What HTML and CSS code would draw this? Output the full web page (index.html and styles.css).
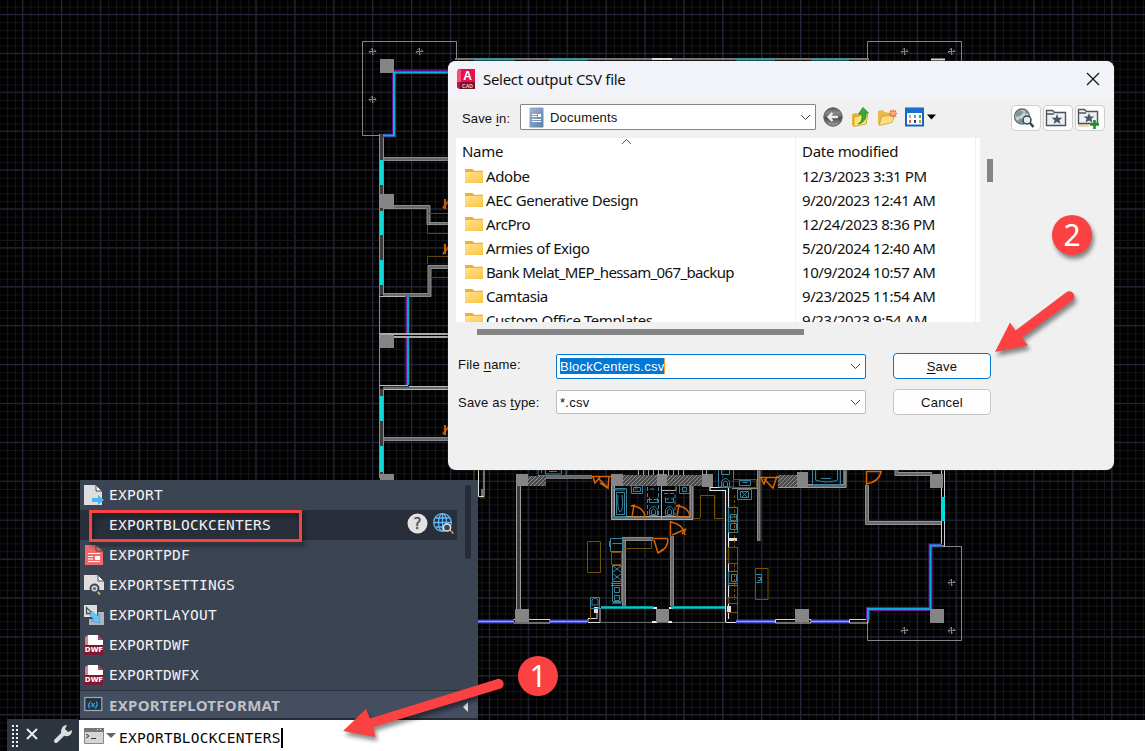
FILE: index.html
```
<!DOCTYPE html>
<html lang="en">
<head>
<meta charset="utf-8">
<title>Export Block Centers</title>
<link rel="stylesheet" href="styles.css">
</head>
<body>
<main class="workspace">
  <svg class="drawing" width="1145" height="751" viewBox="0 0 1145 751">
    <defs>
      <pattern id="minor" x="22.6" y="14.4" width="7.78" height="7.78" patternUnits="userSpaceOnUse">
        <path d="M0 .5H7.78M.5 0V7.78" stroke="#151618" stroke-width="1"/>
      </pattern>
      <pattern id="major" x="22" y="13.9" width="38.9" height="38.9" patternUnits="userSpaceOnUse">
        <path d="M0 .5H38.9M.5 0V38.9" stroke="#26273a" stroke-width="1"/>
      </pattern>
      <pattern id="hatch" width="4" height="4" patternUnits="userSpaceOnUse">
        <rect width="4" height="4" fill="#4c4c4c"/><path d="M0 4L4 0" stroke="#8c8c8c"/>
      </pattern>
      <g id="door"><path d="M0 12L2 0M-1 1l4-1M2 1Q12 3 13 12" fill="none"/><path d="M0 12H13" stroke-dasharray="2 1"/></g>
      <path id="mark" d="M-3.500 0H3.500M0-3.500V3.500M-2-1.500L0-3.500M1.500 2L0 3.500M-3.500 0l1.500 2M3.500 0l-1.500-2"/>
      <g id="toilet"><path d="M-4 10v-6q4-6 8 0v6zM-2 9V5q2-3 4 0v4zM-4-3H4M-4-8V-3M4-8V-3" fill="none"/></g>
    </defs>
    <rect width="1145" height="751" fill="#010102"/>
    <rect width="1145" height="751" fill="url(#minor)"/>
    <rect width="1145" height="751" fill="url(#major)"/>

    <g fill="none" stroke="#858585">
      <path d="M380 135.500H362.500V41.500H456.500V60M867.500 62V41.500H961.500V62M943 546.500H961.500V640.500H867.500V621"/>
      <use href="#mark" x="372.500" y="51.500"/><use href="#mark" x="419.500" y="51.500"/><use href="#mark" x="372.500" y="99.500"/>
      <use href="#mark" x="904.500" y="51.500"/><use href="#mark" x="951.500" y="51.500"/>
      <use href="#mark" x="951.500" y="582.500"/><use href="#mark" x="951.500" y="630.500"/><use href="#mark" x="904.500" y="630.500"/>
    </g>
    <g fill="none" stroke="#888">
      <path d="M455 59H869" stroke-width="2" stroke="#777"/>
      <path d="M474 59.500h40M549 59.500h39M736 59.500h39M811 59.500h38" stroke="#19a9af" stroke-width="2"/>
      <path d="M652 59h20M931 59.500h14" stroke="#ddd" stroke-width="2"/>
    </g>

    <!-- wall cores -->
    <g fill="none" stroke="#686868" stroke-width="3">
      <path d="M383 159H450M383 207H428.500V223.500H450M383 295H429.500V267H450M383 388H450M383 439H450"/>
      <path d="M546 477H592M613 486V518H691.500V486M622 539H653M624 538V606M671.800 536V606M758.500 470V541M778 486H845V470M867 485V522.500H942M896.500 470V474H932"/>
    </g>
    <path d="M381.500 134V295M381.500 389V478M518.500 486V610" stroke="#3d3d3d" stroke-width="3"/>

    <!-- west wing -->
    <g fill="none" stroke="#8b8b8b">
      <path d="M379.500 134V478M383.500 134V295"/>
      <path d="M383 157.500H450M383 160.500H450M383 205.500H430V224M383 208.500H427V224.500H450M430 222.500H450M383 293.500H428V265.500H450M383 296.500H431V268.500H450"/>
      <path d="M379 296.500H408M379 385.500H408M409 386.500H450M383 389.500H450" stroke="#b9b9b9"/>
      <path d="M379 334H450M379 337H450" stroke="#aaa" stroke-width="2"/>
      <path d="M383.500 389V478M383 437.500H450M383 440.500H450"/>
      <path d="M428 213.500h22M427.500 225v8.500h22M427.500 264v-7.500h22M430 277.500h20" stroke="#654806"/>
      <path d="M450 199l-7 9M445 199v10M450 245l-7 9M445 244v10M450 425l-7 9M445 425v10" stroke="#c65c00" stroke-width="2"/>
    </g>
    <path d="M448 71.500H394V135.500H383" fill="none" stroke="#650b9c" stroke-width="4"/>
    <path d="M448 72.500H394V135.500H383" fill="none" stroke="#00b6d1" stroke-width="2"/>
    <path d="M407.500 296V333M407.500 338V385" stroke="#7119ae" stroke-width="4"/><path d="M408 296V333M408 338V385" stroke="#00aab5" stroke-width="2"/>
    <path d="M381.500 160V185M381.500 211V235M381.500 260V285M381.500 396V421M381.500 446V472" stroke="#13d6d6" stroke-width="3"/>
    <path d="M380 59h14v14h-14zM380 194h14v14h-14zM380 335h14v13h-14zM380 474h14v6h-14z" fill="#858585"/>

    <!-- living areas -->
    <g fill="none" stroke="#999">
      <path d="M478.500 468V496.500H484V468M482 489v7" stroke="#ddd"/><path d="M474 470v10M485 498h-5" stroke="#654806"/>
      <path d="M516.500 486V610M520.500 486V610"/>
      <path d="M546 475.500H592M546 478.500H592" stroke="#777"/>
      <path d="M611.500 486V519.500H693V486M614.500 486V516.500H690V486M661.500 486V519M662 490.500h14v-4" stroke="#aaa"/>
      <path d="M622 537.500H653M622 540.500H653M622.500 538V606M625.500 540V606M670.500 536V606M673.500 536V606" stroke="#888"/>
      <path d="M710 487V490.500H725.500V622.500H736M728.500 619V487.500H710" stroke="#e4e4e4" stroke-width="1.200"/>
      <path d="M732 488.500H757M757.500 470V541M760 470V541" stroke="#888"/>
      <path d="M778 484.500H844V470M778 487.500H846V470"/>
      <path d="M865.500 485V524.500H942M868.500 485V521.500H942M895 470v5.500H932M898 470v2.500h34" stroke="#929292"/>
      <path d="M941.500 470V546M944.500 470V546M939 546h6" stroke="#d0d0d0"/>
      <path d="M588 618.500H597V608H600V622.500H588zM513.500 619.500H550V623H513.500zM775.500 619.500H811V623H775.500zM849.500 619.500H868V623H849.500z" stroke="#d5d5d5"/>
      <path d="M600 622.500H726" stroke="#666"/>
      <path d="M652 608h5M669 608h4M652 622h5M668 622h4" stroke="#eee" stroke-width="2"/>
    </g>
    <path d="M594 607h4v6h-4zM727 606h4v6h-4zM728 538h9v3h-9z" fill="#ddd"/>
    <path d="M478 621.500H514M550 621.500H587M736 621.500H775M811 621.500H849" stroke="#5d24bb" stroke-width="4"/>
    <path d="M478 621.500H514M550 621.500H587M736 621.500H775M811 621.500H849" stroke="#20d8f0" stroke-width="1.600"/>
    <path d="M601 607.500H654M671 607.500H725" stroke="#00cccf" stroke-width="2.500"/>
    <path d="M868 620V609H930.500V545.500H942" fill="none" stroke="#7013a3" stroke-width="4"/>
    <path d="M868 620V609H930.500V545.500H942" fill="none" stroke="#00afd4" stroke-width="1.800"/>
    <path d="M943 497V521" stroke="#00dbe2" stroke-width="4"/>
    <path d="M528 476h18v10h-18zM621 475h88v11h-88zM778 475h20v12h-20z" fill="url(#hatch)"/>
    <path d="M516 474h12v12h-12zM611 474h12v12h-12zM657 474h10v12h-10zM702 474h11v13h-11zM797 472h11v15h-11zM930 474h13v14h-13zM515 609h14v13h-14zM656 609h13v13h-13zM795 609h14v13h-14zM930 609h14v14h-14z" fill="#858585"/>
    <path d="M638.500 470v5M643.500 470v5M648.500 470v5M653.500 470v5M658.500 470v5M663.500 470v5M668.500 470v5M673.500 470v5M678.500 470v5M683.500 470v5M702.500 470v5M706.500 470v5" stroke="#aaa"/>

    <!-- fixtures -->
    <g fill="none" stroke="#37849b">
      <path d="M613.500 488.500h13v28h-13zM616.500 492.500h8v22h-8zM618 495q-1 15 2 17q4-2 2-17M631.500 485.500h11v8h-11zM633.500 487.500h7v4h-7zM679.500 485.500h10v8h-10zM682.500 487.500h4v4h-4zM615 490h10M636 486v4"/>
      <path d="M647.500 487v29M658.500 487v29M648 499.500h10M664 493.500h11v23M650 489h6M665 499h9" stroke-dasharray="4 2"/>
      <use href="#toilet" x="653.500" y="505.500"/><use href="#toilet" x="669.500" y="505.500"/><use href="#toilet" x="725.500" y="477.500"/>
      <path d="M718.500 470v17h15v-17M538 470v5.500h28v-5.500M545.500 470v4h16v-4M541.500 470v3M549 471.500h8"/>
      <path d="M610.500 538.500v13h12v-13zM612.500 543.500h10M609.500 541v6M612.500 565.500h9v16h-9zM613 566l8 6M621 566l-8 6M613 574l8 6M621 574l-8 6M612.500 581.500h9v20h-9zM614.500 587.500h5v5h-5zM614.500 595.500h5v5h-5zM611 583.500h11M611 585.500h11M613 602.500h8M590.500 597.500h9v11h-9zM592 600q3-4 6 0v5h-6z"/>
      <path d="M737.500 489.500h14v10h-14zM740.500 491.500h8v6h-8zM742 492l5 5M747 492l-5 5M739.500 480.500h11v5h-11zM742.500 482.500h5M728.500 507.500h9v25h-9zM730.500 514.500h6v6h-6zM730.500 523.500h6v6h-6zM728 517h10M728 521.500h10M728.500 571.500h9v14h-9zM731.500 574.500h5v7h-5zM728 583.500h10"/>
      <path d="M755.500 574.500h6v8h-6zM757.500 577.500h3v3h-3M812.500 470v14.500h28v-14.500M815.500 470v10q12 4 22 0v-10M821 478.500h10"/>
    </g>
    <g fill="none" stroke="#725006">
      <path d="M587.500 541.500h13v31h-13zM611.500 552.500h10v12h-10zM625 548.500h26.500V538M590.500 608v12M612 603.500h10M700.500 518V495.500h14v23h9M693 518.500h7M737.500 547v73M728.500 547.500h9v16h-9zM728.500 597.500h9v6h-9zM733.500 479.500h23v8h-23zM755.500 568.500h12.500v31h-12.500zM728 612.500h9"/>
      <path d="M734.500 495v52M734.500 564v36" stroke-dasharray="3 2"/>
    </g>
    <g fill="none" stroke="#d86300" stroke-width="1.500">
      <use href="#door" x="632" y="505"/><use href="#door" x="677" y="505"/>
      <path d="M591 476.500h20M593 477l2 6 5-6M598 478l10 10 1-12M600 483l8 5"/>
      <path d="M670.500 521v15M671 522q12 2 14 13M672 535l14-6M682 534l4-5"/>
      <path d="M653 538.500h15M654 540l4 13 5-4M658 553q10-4 10-14"/>
      <path d="M760 477.500h18M761 478l3 6 3-7M764 479l9 9 4-12M866.500 471v14M866 484q13-2 15-12M867 471.500h15"/>
    </g>
  </svg>

  <section class="dialog">
    <header class="dialog-title">
      <svg class="app-icon" width="20" height="22" viewBox="0 0 20 22"><rect x="1" y="1" width="17" height="20" rx="1" fill="#e51050"/><path d="M0 3L4 1v19H1q-1 0-1-1z" fill="#c90f45"/><path d="M0 3L4 1v13H0z" fill="#fb4f74"/><path d="M3 14h15v7H3z" fill="#79102d"/><text x="10.500" y="12" class="app-letter">A</text><text x="10.500" y="19.500" class="app-sub">CAD</text></svg>
      <h1>Select output CSV file</h1>
      <svg class="close" width="14" height="14" viewBox="0 0 14 14"><path d="M1 1L13 13M13 1L1 13" stroke="#171717" stroke-width="1.300"/></svg>
    </header>

    <div class="toolbar">
      <label class="save-in">Save <u>i</u>n:</label>
      <div class="location">
        <svg width="15" height="21" viewBox="0 0 15 21"><defs><linearGradient id="docg" x2="1" y2="1"><stop stop-color="#9bb9d6"/><stop offset="1" stop-color="#5b7ea7"/></linearGradient></defs><rect x=".5" y=".5" width="14" height="20" rx="1" fill="url(#docg)"/><path d="M3 7.500h5M3 9.500h5M3 12.500h9M3 14.500h9" stroke="#fff"/><rect x="9" y="7" width="3" height="3" fill="#fff"/></svg>
        <span>Documents</span>
        <svg class="chevron" width="11" height="7" viewBox="0 0 11 7"><path d="M1 1l4.500 4.500L10 1" fill="none" stroke="#444"/></svg>
      </div>
      <div class="nav-icons">
        <svg width="20" height="20" viewBox="0 0 20 20"><defs><linearGradient id="ball" x2="0" y2="1"><stop stop-color="#555"/><stop offset=".25" stop-color="#8a8a8a"/><stop offset=".5" stop-color="#666"/><stop offset=".55" stop-color="#484848"/><stop offset="1" stop-color="#aaa"/></linearGradient></defs><circle cx="10" cy="10" r="9.200" fill="url(#ball)" stroke="#555"/><path d="M15 10H6M9.500 6L5.500 10l4 4" fill="none" stroke="#eee" stroke-width="2.300"/></svg>
        <svg width="19" height="20" viewBox="0 0 19 20"><path d="M1 7l4-1 2 1 9-1v10L4 19.500l-3-1z" fill="#e4b831"/><path d="M3 10l14-3-2 10-12 2.500z" fill="#ffe37a" stroke="#bd922d" stroke-width=".7"/><path d="M7 17q5-2 4-10H7.500L12 .5 17.500 6H15q1 9-8 11z" fill="#35ac37" stroke="#167c23" stroke-width=".7"/></svg>
        <svg width="20" height="20" viewBox="0 0 20 20"><path d="M1 4l5-1 1 2 7 1v9L2 18l-1-2z" fill="#e6bb48"/><path d="M2 18.500l3-9 13-2-3 8z" fill="#ffdf80" stroke="#c99834" stroke-width=".7"/><path d="M16 2.500v8M12 6.500h8M13 3.500l6 6M19 3.500l-6 6" stroke="#f06a3b" stroke-width="1.500"/><circle cx="16" cy="6.500" r="2" fill="#ffb074"/></svg>
        <svg width="31" height="20" viewBox="0 0 31 20"><rect x="1" y="1.500" width="17" height="17" fill="#fff" stroke="#1764bd" stroke-width="2"/><path d="M0 1h19v5H0z" fill="#1670d0"/><path d="M4 8h2v3H4z" fill="#aaa"/><path d="M9 8h2v3H9z" fill="#5598d2"/><path d="M14 8h2v3h-2z" fill="#4aa23a"/><path d="M4 13h2v3H4z" fill="#e45c37"/><path d="M9 13h2v3H9z" fill="#28408b"/><path d="M14 13h2v3h-2z" fill="#bb9d22"/><path d="M22 7.500h9L26.500 12.500z" fill="#000"/></svg>
      </div>
      <div class="tool-buttons">
        <button><svg width="22" height="22" viewBox="0 0 22 22"><circle cx="9" cy="9.500" r="7.500" fill="#c3d2d5" stroke="#5b6a72" stroke-width="1.300"/><path d="M3 6l4-3 4 2-4 4-4 1zM8 11l4 5-4 1-4-3zM12 3l3 3-3 1z" fill="#81949a"/><circle cx="14" cy="13" r="4" fill="#e4f0f2" stroke="#35434d" stroke-width="1.500"/><path d="M17 16l3.500 4" stroke="#35434d" stroke-width="2.500"/></svg></button>
        <button><svg width="22" height="22" viewBox="0 0 22 22"><path d="M1.500 3.500h6l2 2h11v13h-19zM2 7h7" fill="#edf1f4" stroke="#4b5461" stroke-width="1.400"/><path d="M12 7l1.400 3.700h4l-3 2.500 1 3.800-3.400-2.200-3.400 2.200 1-3.800-3-2.500h4z" fill="#4b5461"/></svg></button>
        <button><svg width="22" height="22" viewBox="0 0 22 22"><path d="M1 15h11v5H1z" fill="#ead9bc"/><path d="M1.500 2.500h6l2 2h11v12h-19zM2 6h7" fill="#edf1f4" stroke="#4b5461" stroke-width="1.400"/><path d="M12 6l1.400 3.500h4l-3 2.300 1 3.600-3.400-2-3.400 2 1-3.600-3-2.300h4z" fill="#4b5461"/><path d="M17.500 13v9M13 17.500h9" stroke="#169619" stroke-width="2.600"/></svg></button>
      </div>
    </div>

    <div class="browser">
      <div class="file-list">
        <div class="list-head"><span>Name</span><svg class="sort" width="11" height="7" viewBox="0 0 11 7"><path d="M1 6l4.500-4.500L10 6" fill="none" stroke="#555"/></svg><span>Date modified</span></div>
        <div class="file"><i class="folder"></i><span>Adobe</span><time>12/3/2023 3:31 PM</time></div>
        <div class="file"><i class="folder"></i><span>AEC Generative Design</span><time>9/20/2023 12:41 AM</time></div>
        <div class="file"><i class="folder"></i><span>ArcPro</span><time>12/24/2023 8:36 PM</time></div>
        <div class="file"><i class="folder"></i><span>Armies of Exigo</span><time>5/20/2024 12:40 AM</time></div>
        <div class="file"><i class="folder"></i><span class="long">Bank Melat_MEP_hessam_067_backup</span><time>10/9/2024 10:57 AM</time></div>
        <div class="file"><i class="folder"></i><span>Camtasia</span><time>9/23/2025 11:54 AM</time></div>
        <div class="file"><i class="folder"></i><span>Custom Office Templates</span><time>9/23/2023 9:54 AM</time></div>
      </div>
      <div class="v-thumb"></div>
    </div>
    <div class="h-thumb"></div>

    <div class="form">
      <label class="name-label">File <u>n</u>ame:</label>
      <div class="field active"><span class="selected">BlockCenters.csv</span><svg width="11" height="7" viewBox="0 0 11 7"><path d="M1 1l4.500 4.500L10 1" fill="none" stroke="#444"/></svg></div>
      <button class="primary"><u>S</u>ave</button>
      <label>Save as <u>t</u>ype:</label>
      <div class="field type"><span>*.csv</span><svg width="11" height="7" viewBox="0 0 11 7"><path d="M1 1l4.500 4.500L10 1" fill="none" stroke="#444"/></svg></div>
      <button>Cancel</button>
    </div>
  </section>

  <section class="suggestions">
    <div class="command"><svg width="20" height="20" viewBox="0 0 20 20"><path d="M0 0h12l6 6v14H0z" fill="#dedede"/><path d="M12 0v6h6z" fill="#fff" stroke="#404955"/><path d="M8 13h6v-3l6 5-6 5v-3H8z" fill="#4cb5f4"/></svg><span>EXPORT</span></div>
    <div class="command current"><span class="no-icon"></span><span>EXPORTBLOCKCENTERS</span>
      <svg class="help" width="21" height="21" viewBox="0 0 21 21"><circle cx="10.500" cy="10.500" r="10" fill="#e3e3e3"/><text x="10.500" y="16" text-anchor="middle">?</text></svg>
      <svg class="globe" width="21" height="21" viewBox="0 0 21 21"><g fill="none" stroke="#65b8ef" stroke-width="1.300"><circle cx="9.500" cy="9.500" r="8.800"/><ellipse cx="9.500" cy="9.500" rx="4" ry="8.800"/><path d="M9.500 1v17M1 9.500h17M2.500 5h14M2.500 14h14"/></g><path d="M17 17l3.500 3.500" stroke="#d29a5d" stroke-width="1.500"/><circle cx="14" cy="14.500" r="3.600" fill="#394859" stroke="#e9e9e9" stroke-width="1.500"/></svg>
    </div>
    <div class="command"><svg width="20" height="20" viewBox="0 0 20 20"><path d="M1 0h11l7 6v14H1z" fill="#ed6d6e"/><path d="M12 0v6h7z" fill="#ed6d6e" stroke="#4b4650"/><path d="M4 8.500h12M4 11.500h5M4 14h5M4 16.500h12" stroke="#fff"/><path d="M11 11h5v4h-5z" fill="#fff"/></svg><span>EXPORTPDF</span></div>
    <div class="command"><svg width="20" height="20" viewBox="0 0 20 20"><path d="M0 0h14l6 6v9H0z" fill="#dedede"/><path d="M14 0v6h6z" fill="#fff" stroke="#404955"/><path d="M13 16l3 3.500" stroke="#d6ab71" stroke-width="2"/><circle cx="10.500" cy="13.500" r="4" fill="#d1d8dc" stroke="#404955" stroke-width="2"/><circle cx="10.500" cy="13.500" r="1.500" fill="#5b6875"/></svg><span>EXPORTSETTINGS</span></div>
    <div class="command"><svg width="20" height="20" viewBox="0 0 20 20"><path d="M14 7h6v13H5v-6h9z" fill="#aeb5bd"/><path d="M0 0h13v12H0z" fill="#dedede"/><path d="M2.500 2.500v6h6z" fill="none" stroke="#424b56" stroke-width="1.300"/><path d="M8 6l5 5 2-2 1 9-9-2 2.500-2-4-4z" fill="#66c3fa" stroke="#368ac4" stroke-width=".5"/></svg><span>EXPORTLAYOUT</span></div>
    <div class="command"><svg width="20" height="20" viewBox="0 0 20 20"><path d="M1 3l3-2h10l5 5v14H1q-1 0-1-1z" fill="#7f1836"/><path d="M4 0h10v5h5v5H4z" fill="#fff"/><path d="M1 2l3-2v10H1z" fill="#dc8193"/><path d="M14 0v5h5z" fill="#c13a5c"/><text class="dwf" x="10" y="17">DWF</text></svg><span>EXPORTDWF</span></div>
    <div class="command"><svg width="20" height="20" viewBox="0 0 20 20"><path d="M1 3l3-2h10l5 5v14H1q-1 0-1-1z" fill="#7f1836"/><path d="M4 0h10v5h5v5H4z" fill="#fff"/><path d="M1 2l3-2v10H1z" fill="#dc8193"/><path d="M14 0v5h5z" fill="#c13a5c"/><text class="dwf" x="10" y="17">DWF</text></svg><span>EXPORTDWFX</span></div>
    <div class="command variable"><svg width="20" height="20" viewBox="0 0 20 20"><rect x=".8" y="2.500" width="17" height="13" fill="#233241" stroke="#9ba8b6" stroke-width="1.200"/><text class="var" x="9" y="12">(x)</text></svg><span>EXPORTEPLOTFORMAT</span><b class="expand"></b></div>
    <div class="suggest-thumb"></div>
  </section>

  <footer class="command-bar">
    <div class="bar-tools"><span class="grip"></span><svg width="12" height="12" viewBox="0 0 12 12"><path d="M1 1l10 10M11 1L1 11" stroke="#ececec" stroke-width="2"/></svg><svg class="wrench" width="20" height="20" viewBox="0 0 20 20"><path d="M3 17L12 8" stroke="#ddd" stroke-width="4" stroke-linecap="round"/><path d="M14 1L12 5l3 3 4-2q0 7-7 6L8 9q0-8 6-8z" fill="#ddd"/></svg></div>
    <div class="prompt"><svg class="console" width="20" height="16" viewBox="0 0 20 16"><path d="M.5.500h19v15H.5z" fill="#d5d5d5" stroke="#888"/><path d="M0 0h20v4H0z" fill="#777"/><path d="M13 1.500h1M16 1.500h1" stroke="#fff"/><path d="M2 6l3 2-3 2M7 10.500h5" stroke="#333" fill="none"/></svg><b class="drop"></b><span class="input">EXPORTBLOCKCENTERS</span></div>
  </footer>

  <svg class="annotations" width="1145" height="751" viewBox="0 0 1145 751">
    <g class="shadow"><rect x="90.500" y="511.500" width="210" height="29" fill="none" stroke="#fb4142" stroke-width="3"/></g>
    <g class="shadow" fill="#fb4142">
      <path d="M343 731L366 709l4 9.500L496 679.500a5 5 0 0 1 5 9L373.500 727l2 10z"/>
      <path d="M995 352L1010 322.500l5.500 8L1066 292.500a5 5 0 0 1 6.500 8L1022 337.500l6 8z"/>
      <circle cx="538" cy="676" r="20"/><circle cx="1072" cy="235" r="20"/>
    </g>
    <text class="step" x="538" y="687">1</text><text class="step" x="1072" y="246">2</text>
  </svg>
</main>
</body>
</html>
```
FILE: styles.css
```
* { box-sizing: border-box; }
body { margin: 0; width: 1145px; height: 751px; overflow: hidden; font-family: "Liberation Sans", sans-serif; font-size: 13px; color: #111; }
svg { display: block; flex: none; }
.workspace { position: relative; width: 1145px; height: 751px; display: flex; align-items: flex-end; background: #000; }
.drawing, .annotations { position: absolute; inset: 0; }
.annotations { pointer-events: none; }
.shadow { filter: drop-shadow(2px 4px 2px rgba(0,0,0,.45)); }
.step { fill: #fff; font: 30px "Noto Sans", sans-serif; text-anchor: middle; }

.dialog { position: absolute; left: 448px; top: 61px; width: 666px; height: 409px; border-radius: 8px; background: #f0f0f0; overflow: hidden; box-shadow: 0 0 2px #444; }
.dialog-title { height: 37px; padding: 0 14px 2px 9px; display: flex; align-items: center; background: #f1f3f9; }
.dialog-title h1 { margin: 0 auto 0 6px; font: 15px/20px "Noto Sans", sans-serif; letter-spacing: -.3px; }
.app-letter { font: bold 12px "Liberation Sans", sans-serif; fill: #fff; text-anchor: middle; }
.app-sub { font: bold 5px "Liberation Sans", sans-serif; fill: #f2cbd3; text-anchor: middle; }
.toolbar { height: 40px; padding: 6px 9px 0 14px; display: flex; align-items: flex-start; }
.save-in { width: 58px; line-height: 29px; letter-spacing: .15px; }
u { text-underline-offset: 2px; text-decoration-thickness: 1px; }
.location { width: 296px; height: 26px; padding: 0 4px 0 8px; display: flex; align-items: center; border: 1px solid #858585; background: #fff; border-radius: 1px; }
.location span { margin-left: 6px; letter-spacing: .2px; }
.chevron { margin-left: auto; }
.nav-icons { display: flex; gap: 8px; margin: 3px 0 0 7px; }
.nav-icons svg + svg { margin-left: -.3px; }
.tool-buttons { display: flex; gap: 2px; margin: 1px 0 0 auto; }
.tool-buttons button { width: 30px; height: 26px; padding: 0 0 0 1px; border: 1px solid #cfcfcf; border-radius: 4px; background: #fdfdfd; display: flex; align-items: center; }

.browser { display: flex; margin-left: 8px; height: 184px; }
.file-list { width: 524px; height: 184px; overflow: hidden; background: linear-gradient(#eaf1fb,#eaf1fb) 339px 0/1px 100% no-repeat, linear-gradient(#eaf1fb,#eaf1fb) 519px 0/1px 100% no-repeat, #fff; font: 15px/24px "Noto Sans", sans-serif; letter-spacing: -.2px; }
.list-head { position: relative; height: 26px; padding: 1px 0 0 6px; display: grid; grid-template-columns: 340px 1fr; }
.list-head span { letter-spacing: -.3px; }
.sort { position: absolute; left: 165px; top: 0; }
.file { height: 24px; padding-left: 9px; display: grid; grid-template-columns: 21px 316px 1fr; align-items: center; letter-spacing: -.42px; }
.file time { letter-spacing: -.4px; }
.file .long { letter-spacing: -.64px; }
.folder { width: 18px; height: 14px; background: linear-gradient(150deg,#ffe391,#f9c441); clip-path: polygon(0 0,42% 0,50% 12%,100% 12%,100% 100%,0 100%); border-top: 3px solid #edb12d; }
.v-thumb { width: 6px; height: 23px; margin: 21px 0 0 7px; background: #858585; }
.h-thumb { width: 327px; height: 6px; margin: 7px 0 0 29px; background: #858585; }
.form { display: grid; grid-template-columns: 98px 310px 98px; column-gap: 0; row-gap: 10px; padding: 18px 0 0 10px; align-items: center; }
.form label { letter-spacing: .22px; }
.form .name-label { margin-top: -4px; }
.field { height: 25px; padding: 0 4px 0 3px; display: flex; align-items: center; justify-content: space-between; border: 1px solid #bdbdbd; border-radius: 2px; background: #fdfdfd; }
.field.active { border-color: #0078d4; background: #fff; }
.field.type { height: 24px; letter-spacing: .3px; }
.selected { height: 16px; line-height: 17px; color: #fff; background: #0078d7; border-right: 1px solid #ff9d36; letter-spacing: .25px; }
.form button { margin-left: 27px; width: 98px; height: 26px; border: 1px solid #c5c5c5; border-radius: 4px; background: #fdfdfd; color: #111; font: 13px "Liberation Sans", sans-serif; letter-spacing: .25px; }
.form .primary { border-color: #0078d4; }

.suggestions { position: absolute; left: 80px; top: 480px; width: 398px; height: 240px; background: #3b4453; font: 14.500px/30px "DejaVu Sans Mono", monospace; letter-spacing: .27px; color: #f2f2f2; }
.command { height: 30px; padding-left: 4px; display: flex; align-items: center; }
.command > span { margin: -1px 0 0 5px; }
.command .no-icon { width: 20px; margin: 0; }
.current { width: 377px; background: #282f3a; }
.help { margin: -3px 0 0 auto; }
.help text { font: 15px "DejaVu Sans", sans-serif; fill: #505050; stroke: #505050; stroke-width: .4px; }
.globe { margin: -3px 3px 0 5px; }
.dwf { font: bold 7px "DejaVu Sans", sans-serif; fill: #fff; text-anchor: middle; letter-spacing: 0; }
.var { font: italic bold 9px "Liberation Serif", serif; fill: #44b6fa; text-anchor: middle; letter-spacing: 0; }
.variable { border-top: 1px solid #29323e; border-bottom: 2px solid #242b34; background: #454e60; color: #bec1c8; font: bold 15px/27px "Noto Sans", sans-serif; letter-spacing: .3px; }
.variable > span { margin-top: 1px; }
.expand { margin: 4px 10px 0 auto; border: 5px solid transparent; border-left: 0; border-right-color: #ddd; }
.suggest-thumb { position: absolute; right: 7px; top: 5px; width: 6px; height: 74px; border-radius: 3px; background: #252c36; }
.command-bar { position: relative; width: 1138px; height: 32px; margin-left: 7px; display: flex; }
.bar-tools { width: 72px; background: #2c343e; display: flex; align-items: center; gap: 9px; padding-left: 4px; }
.bar-tools svg { margin: -2px 0 0 -1px; }
.grip { width: 7px; height: 23px; background: radial-gradient(circle,#eee 1px,transparent 1.200px) 0 0/4px 4px; }
.bar-tools .wrench { margin-left: 6px; }
.prompt { flex: 1; margin-top: 1px; display: flex; align-items: center; padding-left: 5px; background: #fff; }
.drop { margin: 0 3px 0 2px; border: 5px solid transparent; border-top-color: #666; border-bottom: 0; }
.input { color: #080808; font: 14.500px/20px "DejaVu Sans Mono", monospace; border-right: 2px solid #000; margin-top: 5px; letter-spacing: .25px; }
```
